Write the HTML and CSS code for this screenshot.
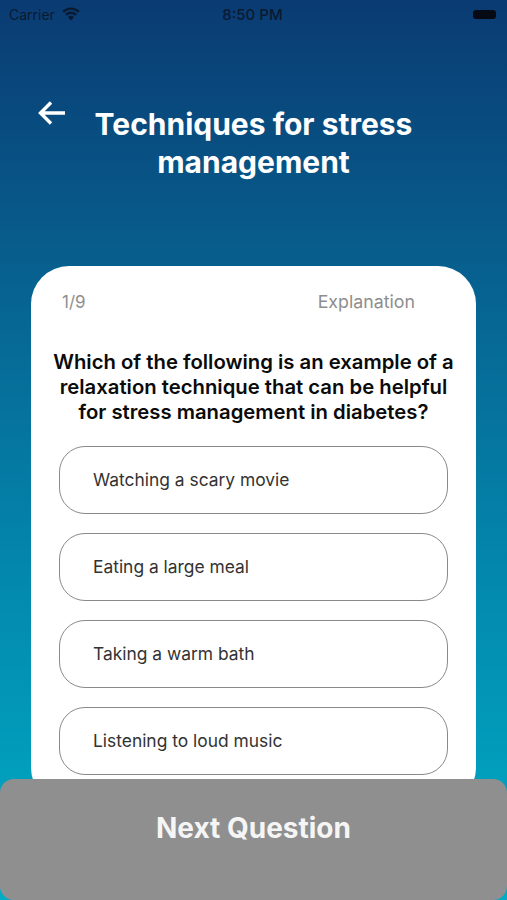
FILE: index.html
```html
<!doctype html>
<html lang="en">
    <head>
        <meta charset="UTF-8" />
        <meta name="viewport" content="width=device-width, initial-scale=1.0" />
        <title>Techniques for stress management</title>
        <link rel="stylesheet" href="styles.css">
    </head>
    <body>
        <div class="screen">
            <div class="statusBar">
                <div class="statusLeft">
                    <span>Carrier</span>
                    <svg class="wifi" width="18" height="14" viewBox="0 0 18 14">
                        <path d="M9 13.4 L6 10.2 A4.4 4.4 0 0 1 12 10.2 Z" fill="#0a1a30" />
                        <path d="M4 7.9 A7 7 0 0 1 14 7.9" fill="none" stroke="#0a1a30" stroke-width="2.4" />
                        <path d="M1.2 4.9 A11 11 0 0 1 16.8 4.9" fill="none" stroke="#0a1a30" stroke-width="2.4" />
                    </svg>
                </div>
                <span class="statusTime">8:50 PM</span>
                <div class="battery"></div>
            </div>
            <div class="header">
                <svg class="backArrow" width="28" height="24" viewBox="0 0 28 24">
                    <path d="M27 12 H3.5 M13 1.5 L2.5 12 L13 22.5" fill="none" stroke="#fff" stroke-width="3.4" />
                </svg>
                <h1>Techniques for stress<br />management</h1>
            </div>
            <div class="card">
                <div class="cardTop">
                    <span>1/9</span>
                    <span class="explanation">Explanation</span>
                </div>
                <h2>Which of the following is an example of a relaxation technique that can be helpful for stress management in diabetes?</h2>
                <div class="options">
                    <div class="option">Watching a scary movie</div>
                    <div class="option">Eating a large meal</div>
                    <div class="option">Taking a warm bath</div>
                    <div class="option">Listening to loud music</div>
                </div>
            </div>
            <div class="nextButton">Next Question</div>
        </div>
    </body>
</html>
```

FILE: styles.css
```css
* {
    box-sizing: border-box;
}
body {
    margin: 0;
    font-family: Inter, "Liberation Sans", sans-serif;
}
.screen {
    position: relative;
    width: 507px;
    height: 900px;
    overflow: hidden;
    background: linear-gradient(180deg, #0a3b72 0%, #07608f 30%, #0389ae 65%, #00acc6 100%);
}
.statusBar {
    display: grid;
    grid-template-columns: 1fr auto 1fr;
    align-items: center;
    height: 28px;
    padding: 0 11px 0 9px;
    font-size: 14px;
    color: #0a1a30;
}
.statusLeft {
    display: flex;
    align-items: center;
    gap: 7px;
}
.statusTime {
    font-size: 15px;
    font-weight: 500;
}
.battery {
    justify-self: end;
    width: 23px;
    height: 9px;
    border-radius: 3px;
    background: #050a14;
}
.header {
    position: relative;
    padding-top: 77px;
    height: 238px;
}
.backArrow {
    position: absolute;
    left: 38px;
    top: 73px;
}
h1 {
    margin: 0;
    font-size: 30px;
    line-height: 38px;
    font-weight: 700;
    color: #fff;
    text-align: center;
}
.card {
    margin: 0 31px;
    height: 540px;
    padding: 24px 28px;
    background: #fff;
    border-radius: 38px;
}
.cardTop {
    display: flex;
    justify-content: space-between;
    padding: 0 33px 0 3px;
    font-size: 17px;
    line-height: 24px;
    color: #8e8e8e;
}
.explanation {
    font-size: 17.8px;
}
h2 {
    margin: 35px -8px 22px;
    font-size: 20.3px;
    line-height: 25px;
    font-weight: 600;
    color: #0b0b0b;
    text-align: center;
}
.options {
    display: flex;
    flex-direction: column;
    gap: 19px;
}
.option {
    display: flex;
    align-items: center;
    height: 68px;
    padding: 0 0 2px 33px;
    border: 1px solid #8a8a8a;
    border-radius: 26px;
    font-size: 17.4px;
    color: #333;
}
.nextButton {
    position: absolute;
    left: 0;
    right: 0;
    bottom: 0;
    height: 121px;
    padding-top: 30px;
    background: #8f8f8f;
    border-radius: 14px;
    font-size: 28px;
    line-height: 38px;
    font-weight: 700;
    color: #f5f5f5;
    text-align: center;
}
```
